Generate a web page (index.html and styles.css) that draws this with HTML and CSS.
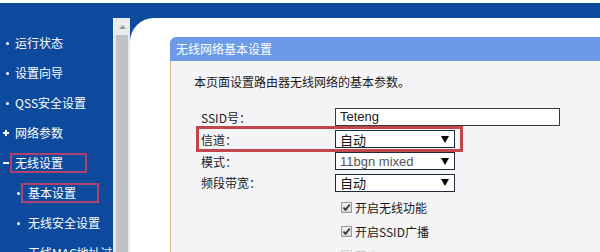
FILE: index.html
```html
<!DOCTYPE html>
<html lang="zh-CN">
<head>
<meta charset="utf-8">
<title>无线网络基本设置</title>
<link rel="stylesheet" href="styles.css">
</head>
<body>
<div class="frame">
  <nav class="side">
    <ul class="menu">
      <li class="item"><span class="dot"></span>运行状态</li>
      <li class="item"><span class="dot"></span>设置向导</li>
      <li class="item"><span class="dot"></span>QSS安全设置</li>
      <li class="item"><svg class="pm" width="6" height="6" viewBox="0 0 6 6"><path d="M0 3H6M3 0V6" stroke="#fff" stroke-width="2"/></svg>网络参数</li>
      <li class="item"><svg class="pm" width="6" height="6" viewBox="0 0 6 6"><path d="M0 3H6" stroke="#fff" stroke-width="2"/></svg><span class="mark mark-top">无线设置</span></li>
      <li class="item sub"><span class="dot"></span><span class="mark mark-sub">基本设置</span></li>
      <li class="item sub"><span class="dot"></span>无线安全设置</li>
      <li class="item sub"><span class="dot"></span>无线MAC地址过滤</li>
    </ul>
  </nav>
  <div class="scroll">
    <div class="scroll-up"><svg width="7" height="4" viewBox="0 0 7 4"><path d="M0 4L3.5 0L7 4Z" fill="#9a9a9a"/></svg></div>
    <div class="scroll-thumb"></div>
  </div>
  <main class="main">
    <section class="panel">
      <header class="panel-head">无线网络基本设置</header>
      <div class="panel-body">
        <p class="desc">本页面设置路由器无线网络的基本参数。</p>
        <div class="row r1">
          <span class="label">SSID号：</span>
          <div class="text-input">Teteng</div>
        </div>
        <div class="row r2 hl">
          <span class="label">信道：</span>
          <div class="select"><span>自动</span><svg class="arrow" width="8" height="7" viewBox="0 0 8 7"><path d="M0 0H8L4 7Z" fill="#000"/></svg></div>
        </div>
        <div class="row r3">
          <span class="label">模式：</span>
          <div class="select"><span class="muted">11bgn mixed</span><svg class="arrow" width="8" height="7" viewBox="0 0 8 7"><path d="M0 0H8L4 7Z" fill="#000"/></svg></div>
        </div>
        <div class="row r4">
          <span class="label">频段带宽：</span>
          <div class="select"><span>自动</span><svg class="arrow" width="8" height="7" viewBox="0 0 8 7"><path d="M0 0H8L4 7Z" fill="#000"/></svg></div>
        </div>
        <div class="row chk">
          <span class="label"></span>
          <span class="box"><svg width="9" height="9" viewBox="0 0 9 9"><path d="M1.5 4.5L3.5 6.8L7.8 1.5" fill="none" stroke="#333" stroke-width="1.8"/></svg></span>
          <span class="chk-text">开启无线功能</span>
        </div>
        <div class="row chk">
          <span class="label"></span>
          <span class="box"><svg width="9" height="9" viewBox="0 0 9 9"><path d="M1.5 4.5L3.5 6.8L7.8 1.5" fill="none" stroke="#333" stroke-width="1.8"/></svg></span>
          <span class="chk-text">开启SSID广播</span>
        </div>
        <div class="row chk">
          <span class="label"></span>
          <span class="box dim"></span>
          <span class="chk-text dim-text">开启WDS</span>
        </div>
      </div>
    </section>
  </main>
</div>
</body>
</html>
```
FILE: styles.css
```css
html, body {
  margin: 0;
  padding: 0;
  background: #fff;
  width: 600px;
  height: 252px;
  overflow: hidden;
}
body {
  font-family: "Noto Sans CJK SC", "DejaVu Sans", sans-serif;
  font-size: 12px;
}
.frame {
  margin-top: 3px;
  height: 249px;
  display: flex;
  background: #0d4a9e;
  overflow: hidden;
}
.side {
  width: 113px;
  flex: none;
  color: #fff;
}
.menu {
  list-style: none;
  margin: 0;
  padding: 25px 0 0 0;
}
.item {
  height: 30px;
  display: flex;
  align-items: center;
  white-space: nowrap;
  line-height: 16px;
}
.dot {
  width: 3px;
  height: 3px;
  border-radius: 50%;
  background: #fff;
  margin: 0 6px 0 6px;
  flex: none;
}
.sub .dot {
  margin: 0 8px 0 17px;
}
.pm {
  margin: 0 6px 0 3px;
  flex: none;
}
.mark {
  display: inline-block;
  border: 2px solid #b0406c;
  line-height: 16px;
}
.mark-top {
  margin-left: -5px;
  padding: 0 22px 0 3px;
}
.mark-sub {
  margin-left: -7px;
  padding: 0 21px 0 5px;
}
.scroll {
  width: 17px;
  flex: none;
  margin-top: 15px;
  background: #e6eaee;
  display: flex;
  flex-direction: column;
}
.scroll-up {
  height: 17px;
  display: flex;
  align-items: center;
  justify-content: center;
  background: #ebebeb;
  border-left: 1px solid #f6f8fa;
}
.scroll-thumb {
  flex: 1;
  margin: 0 2px 0 3px;
  background: #c2c2c2;
}
.main {
  flex: 1;
  margin-top: 15px;
  background: #fff;
  border-top-left-radius: 24px;
  padding: 19px 0 0 40px;
}
.panel {
  height: 100%;
  display: flex;
  flex-direction: column;
}
.panel-head {
  height: 24px;
  line-height: 24px;
  padding-left: 6px;
  background: #6a9ae8;
  color: #fff;
  border-top-left-radius: 6px;
  font-size: 12px;
}
.panel-body {
  flex: 1;
  background: #f4f4f6;
  border-left: 1px solid #d2b584;
  padding: 12px 0 0 23px;
  color: #1a1a1a;
}
.desc {
  margin: 0 0 15px 0;
  line-height: 18px;
}
.row {
  display: flex;
  align-items: center;
  margin-left: 4px;
  height: 22px;
}
.r4 {
  height: 21px;
}
.chk {
  height: 24px;
}
.chk:first-of-type {
  margin-top: 0;
}
.r4 + .chk {
  margin-top: 2px;
}
.label {
  width: 134px;
  padding-left: 3px;
  flex: none;
}
.hl {
  width: fit-content;
  padding-right: 6px;
  outline: 3px solid #c2474a;
  outline-offset: -1px;
}
.text-input {
  box-sizing: border-box;
  width: 225px;
  height: 18px;
  border: 1px solid #3a3a3a;
  background: #fff;
  font-family: "Liberation Sans", Arial, sans-serif;
  font-size: 13px;
  line-height: 16px;
  padding-left: 4px;
  color: #222;
}
.select {
  box-sizing: border-box;
  width: 120px;
  height: 18px;
  border: 1px solid #1e2a3a;
  background: #fff;
  display: flex;
  align-items: center;
  justify-content: space-between;
  padding: 0 5px 0 4px;
  font-size: 13px;
  color: #111;
}
.select .muted {
  font-family: "Liberation Sans", Arial, sans-serif;
  color: #555;
}
.arrow {
  flex: none;
}
.box {
  box-sizing: border-box;
  width: 11px;
  height: 11px;
  margin-left: 6px;
  border: 1px solid #9a9a9a;
  background: linear-gradient(#f2f2f2, #d8d8d8);
  display: flex;
  align-items: center;
  justify-content: center;
  flex: none;
}
.box.dim {
  border-color: #d6d6d6;
  background: #eee;
}
.chk-text {
  margin-left: 3px;
  font-size: 12px;
}
.dim-text {
  color: #c8c8c8;
}
```
